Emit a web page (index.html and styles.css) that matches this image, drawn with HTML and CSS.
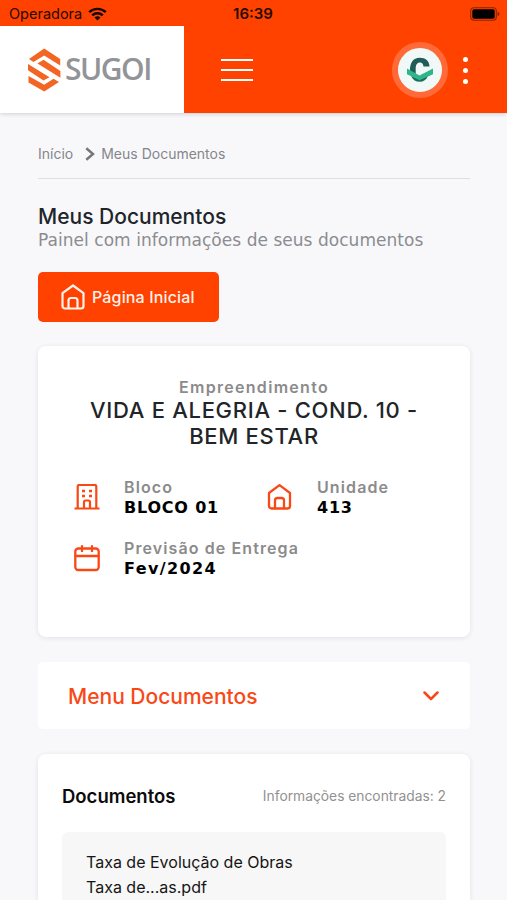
FILE: index.html
```html
<!DOCTYPE html>
<html lang="pt-BR">
<head>
<meta charset="utf-8">
<meta name="viewport" content="width=device-width, initial-scale=1">
<title>Meus Documentos</title>
<link rel="stylesheet" href="styles.css">
</head>
<body>
<header class="top">
  <div class="status">
    <div class="carrier"><span class="operator">Operadora</span>
      <svg width="19" height="14" viewBox="0 0 19 14" fill="none" stroke="#160600" stroke-width="2.4"><path d="M1.2 5.2a12 12 0 0 1 16.6 0M4.2 8.4a7.6 7.6 0 0 1 10.6 0"/><path d="M9.5 13.6l-3-3a4.2 4.2 0 0 1 6 0z" fill="#160600" stroke="none"/></svg>
    </div>
    <span class="clock">16:39</span>
    <svg class="battery" width="30" height="14" viewBox="0 0 30 14"><rect x=".7" y=".7" width="25.6" height="12.6" rx="3" fill="none" stroke="#160600" stroke-opacity=".5" stroke-width="1.1"/><rect x="2.3" y="2.3" width="22.4" height="9.4" rx="1.6" fill="#000"/><path d="M27.6 4.8c2.4.8 2.4 3.6 0 4.4z" fill="#160600" fill-opacity=".55"/></svg>
  </div>
  <div class="bar">
    <div class="brand">
      <svg width="33" height="44" viewBox="0 0 33 44" fill="#f26522"><path d="M1 11L16.200 0.500 32.200 11v6.500L16.200 7.500 5.500 14z"/><path d="M0 16v6.300L15.500 32.500l6-3.200zM9.500 15.500l6-3.700L32.400 23v6.800z"/><path d="M.5 28v6.500L16.200 43.500 31 34l-5.500-3.300L16.200 36.800z"/></svg>
      <span class="brand-name">SUGOI</span>
    </div>
    <div class="burger"><i></i><i></i><i></i></div>
    <div class="avatar">
      <svg width="28" height="26" viewBox="0 0 28 26"><path d="M23.500 9.500h-6C17.200 7 16 5.500 14 5.500c-3 0-4.300 2.300-4.300 6.500v6L4 15C3.500 6 7 .8 13.800.8c5.800 0 9.500 3.200 9.700 8.700z" fill="#1f5e57"/><path d="M5 19l8.500 3 8.500-3.200c-1.500 4-4.500 6-8.200 6-3.900 0-7-1.800-8.800-5.800z" fill="#1f6b60"/><path d="M1 11.500l12.500 7L27 11.500v5.700l-13.500 6L1 17.200z" fill="#2fb58c"/></svg>
    </div>
    <div class="dots"><i></i><i></i><i></i></div>
  </div>
</header>
<main>
  <nav class="crumbs"><span class="crumb-home">Início</span>
    <svg width="10" height="14" viewBox="0 0 10 14" fill="none" stroke="#777" stroke-width="2.5"><path d="M1.300 1.200L8 7l-6.700 5.800"/></svg>
    <span class="crumb-page">Meus Documentos</span></nav>
  <h1>Meus Documentos</h1>
  <p class="lead"><span>Painel com informações de seus documentos</span></p>
  <a class="button"><svg width="24" height="26" viewBox="0 0 24 26" fill="none" stroke="currentColor" stroke-width="2.200" stroke-linejoin="round"><path d="M1.500 9.200L12 1.500l10.500 7.700V22a2.500 2.500 0 0 1-2.500 2.500H4A2.500 2.500 0 0 1 1.500 22zM7.500 24.500v-8a2.500 2.500 0 0 1 2.500-2.500h4a2.500 2.500 0 0 1 2.500 2.500v8"/></svg><span>Página Inicial</span></a>
  <section class="card project">
    <div class="label project-label">Empreendimento</div>
    <h2>VIDA E ALEGRIA - COND. 10 -<br>BEM ESTAR</h2>
    <div class="facts">
      <div class="fact"><svg width="26" height="27" viewBox="0 0 26 27" fill="none" stroke="currentColor" stroke-width="2.2"><path d="M.5 24.500h25M3.700 24V2.500A1.500 1.500 0 0 1 5.200 1h15.600a1.500 1.500 0 0 1 1.500 1.500V24M10 24v-6a1.500 1.500 0 0 1 1.500-1.500h3A1.500 1.500 0 0 1 16 18v6"/><path d="M8 7h3M15 7h3M8 12h3M15 12h3" stroke-width="2.600"/></svg><div><div class="label">Bloco</div><div class="value">BLOCO 01</div></div></div>
      <div class="fact"><svg width="26" height="27" viewBox="-.5 0 26 27" fill="none" stroke="currentColor" stroke-width="2.300" stroke-linejoin="round"><path d="M1.500 9L12 1.200 22.500 9v13a2.500 2.500 0 0 1-2.500 2.500H4A2.500 2.500 0 0 1 1.500 22zM7.500 24.500v-8A2.500 2.500 0 0 1 10 14h4a2.500 2.500 0 0 1 2.500 2.500v8"/></svg><div><div class="label">Unidade</div><div class="value">413</div></div></div>
      <div class="fact wide"><svg width="26" height="27" viewBox="0 0 26 27" fill="none" stroke="currentColor" stroke-width="2.300" stroke-linecap="round"><rect x="1.300" y="3.500" width="23.400" height="21.500" rx="3"/><path d="M1.500 11h23M8 1.200v5M18 1.200v5"/></svg><div><div class="label">Previsão de Entrega</div><div class="value date">Fev/2024</div></div></div>
    </div>
  </section>
  <section class="menu"><span>Menu Documentos</span>
    <svg width="16" height="10" viewBox="0 0 16 10" fill="none" stroke="currentColor" stroke-width="2.500" stroke-linecap="round" stroke-linejoin="round"><path d="M1.500 1.500L8 8l6.500-6.500"/></svg></section>
  <section class="card documents">
    <div class="doc-head"><h3>Documentos</h3><span class="count">Informações encontradas: 2</span></div>
    <div class="doc"><div>Taxa de Evolução de Obras</div><div class="file">Taxa de...as.pdf</div></div>
  </section>
</main>
</body>
</html>
```
FILE: styles.css
```css
* { box-sizing: border-box; }
body { margin: 0; height: 900px; overflow: hidden; background: #f8f8fb; font-family: Inter, sans-serif; color: #212529; }
h1, h2, h3, p { margin: 0; }
svg { display: block; flex: none; }
span { white-space: nowrap; }
.top { height: 113px; background: #ff4200; box-shadow: 0 1px 4px rgba(40, 40, 60, .2); }
.status { display: grid; grid-template-columns: 1fr auto 1fr; align-items: center; height: 26px; padding: 1px 7px 0 9px; color: #260b00; }
.carrier { display: flex; align-items: center; gap: 6px; font-size: 14.500px; }
.clock { margin-right: 3px; font-size: 15px; font-weight: 600; }
.battery { justify-self: end; }
.bar { display: flex; align-items: center; height: 87px; }
.brand { display: flex; align-items: center; width: 184px; height: 87px; padding-left: 28px; gap: 4px; background: #fff; }
.brand-name { margin-top: -1px; color: #929497; font: 600 30px/44px "Open Sans", sans-serif; letter-spacing: -1.5px; }
.burger { display: flex; flex-direction: column; gap: 8px; width: 32px; margin-left: 37px; }
.burger i { height: 2px; background: #fff; }
.avatar { display: grid; place-items: center; width: 56px; height: 56px; margin-left: 139px; border: 6px solid #ff6a38; border-radius: 50%; background: #f1f8f8; }
.dots { display: flex; flex-direction: column; gap: 6px; margin-left: 15px; padding-top: 2px; }
.dots i { width: 5px; height: 5px; border-radius: 50%; background: #fff; }
main { padding: 0 37px 0 38px; }
.crumbs { display: flex; align-items: center; height: 66px; padding-top: 16px; border-bottom: 1px solid #dfdfe3; color: #85868a; font-size: 14px; }
.crumbs svg { margin: 0 6px 0 12px; }
h1 { margin-top: 26px; font-size: 21px; font-weight: 550; line-height: 24px; }
.lead { padding-top: 1px; color: #8b8c90; font: 17px/20px "DejaVu Sans", sans-serif; letter-spacing: .04px; }
.button { display: flex; align-items: center; gap: 7px; width: 181px; height: 50px; margin-top: 22px; padding-left: 23px; border-radius: 5px; background: #ff4200; color: #fff2ec; font-size: 16px; font-weight: 550; letter-spacing: .15px; }
.card { border-radius: 8px; background: #fff; box-shadow: 0 1px 5px rgba(40, 40, 60, .1); }
.project { height: 291px; margin-top: 24px; padding-top: 31px; }
.label { color: #8b8b8b; font-size: 16px; font-weight: 600; line-height: 20px; letter-spacing: 1.100px; }
.project-label { letter-spacing: 1.300px; text-align: center; }
h2 { text-align: center; font-size: 22px; font-weight: 550; line-height: 26px; letter-spacing: .7px; }
.facts { display: grid; grid-template-columns: 193px 1fr; row-gap: 20px; margin-top: 28px; padding-left: 36px; }
.fact { display: flex; align-items: center; gap: 24px; height: 41px; color: #f94816; }
.fact.wide { grid-column: span 2; }
.value { padding-top: 1px; color: #000; font: bold 16px/20px "DejaVu Sans", sans-serif; letter-spacing: .8px; }
.date { letter-spacing: 1.400px; }
.menu { display: flex; align-items: center; justify-content: space-between; height: 67px; margin-top: 25px; padding: 1px 31px 0 30px; border-radius: 5px; background: #fff; color: #f94816; font-size: 21px; font-weight: 550; }
.documents { height: 146px; margin-top: 25px; padding: 30px 24px 0; border-radius: 8px 8px 0 0; }
.doc-head { display: flex; align-items: center; justify-content: space-between; height: 24px; }
h3 { color: #0b0b0b; font-size: 18.500px; font-weight: 600; }
.count { color: #919191; font-size: 13.800px; }
.doc { height: 68px; margin-top: 24px; padding: 18px 24px 0; border-radius: 6px 6px 0 0; background: #f7f7f7; color: #151515; font-size: 16px; line-height: 25px; }
```
